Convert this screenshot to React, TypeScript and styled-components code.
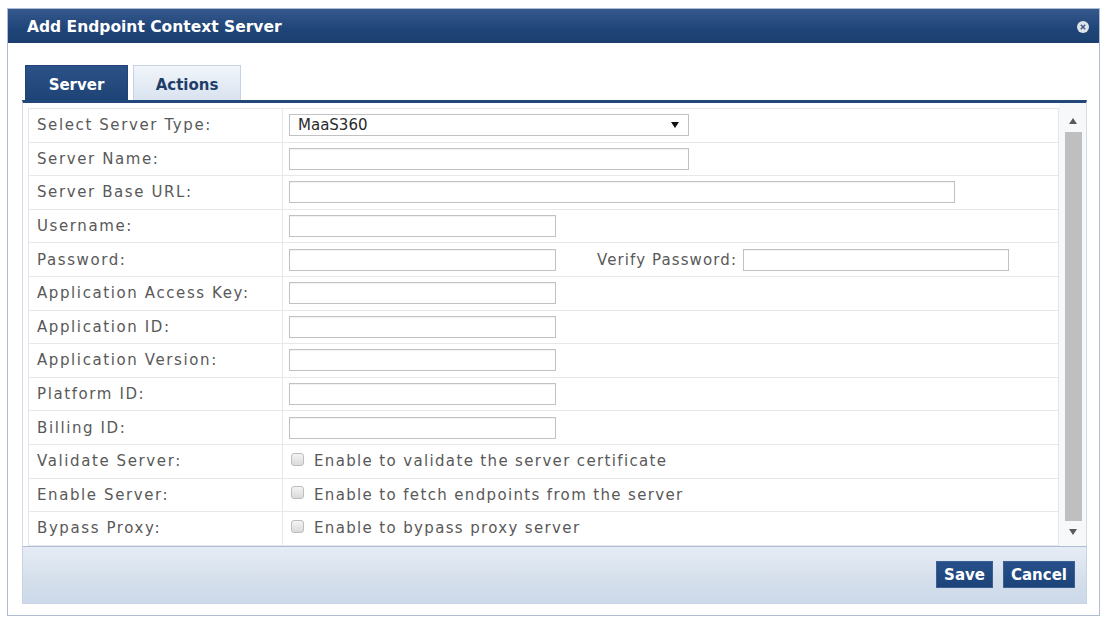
import styled, {createGlobalStyle} from "styled-components";

const GlobalStyle = createGlobalStyle`
  html, body {
    margin: 0;
    padding: 0;
    background: #ffffff;
  }
  body {
    font-family: "DejaVu Sans", Verdana, sans-serif;
  }
`

const Dialog = styled.section`
  margin: 8px 0 0 7px;
  width: 1093px;
  height: 608px;
  box-sizing: border-box;
  border: 1px solid #aebdd2;
  background: #ffffff;
  display: flex;
  flex-direction: column;
`

const Header = styled.header`
  height: 34px;
  display: flex;
  align-items: center;
  justify-content: space-between;
  padding: 2px 9px 0 19px;
  box-sizing: border-box;
  background: linear-gradient(#36598d, #1f4477 60%, #1c3f70);
`

const Title = styled.h1`
  margin: 0;
  font-size: 15.5px;
  font-weight: bold;
  color: #ffffff;
`

const CloseButton = styled.button`
  border: none;
  background: none;
  padding: 0;
  width: 14px;
  height: 14px;
  display: flex;
  cursor: pointer;
`

const Body = styled.div`
  flex: 1;
  display: flex;
  flex-direction: column;
  padding: 22px 12px 11px 14px;
`

const TabRow = styled.div`
  display: flex;
  align-items: flex-end;
  gap: 5px;
  padding-left: 3px;
`

const Tab = styled.button<{ $active?: boolean }>`
  height: 35px;
  width: ${p => p.$active ? 103 : 108}px;
  border: 1px solid ${p => p.$active ? "#1f4477" : "#c6d3e3"};
  border-bottom: none;
  font-family: "DejaVu Sans", Verdana, sans-serif;
  font-size: 15px;
  font-weight: bold;
  color: ${p => p.$active ? "#ffffff" : "#1f3d6b"};
  background: ${p => p.$active
    ? "linear-gradient(#2c5187, #1e4375)"
    : "linear-gradient(#f1f5fa, #d9e3ef)"};
  padding: 4px 0 0;
  cursor: pointer;
`

const Panel = styled.div`
  display: flex;
  border-top: 3px solid #22477a;
  border-left: 1px solid #d3dbe5;
  border-right: 1px solid #d3dbe5;
`

const FormArea = styled.div`
  flex: 1;
  padding: 5px 0 0 5px;
`

const Table = styled.div`
  border-left: 1px solid #e3e6ea;
  border-right: 1px solid #e3e6ea;
  border-top: 1px solid #e3e6ea;
`

const Row = styled.div`
  display: grid;
  grid-template-columns: 254px 1fr;
  height: 33.6px;
  box-sizing: border-box;
  border-bottom: 1px solid #e6e8eb;
`

const Label = styled.div`
  display: flex;
  align-items: center;
  padding-left: 8px;
  border-right: 1px solid #e6e8eb;
  font-size: 15px;
  letter-spacing: 1.6px;
  color: #595959;
`

const Value = styled.div`
  display: flex;
  align-items: center;
  padding-left: 6px;
`

const TextInput = styled.input<{ $width: number }>`
  width: ${p => p.$width}px;
  height: 22px;
  box-sizing: border-box;
  border: 1px solid #c2c2c2;
  box-shadow: inset 0 1px 1px rgba(0, 0, 0, 0.06);
  background: #ffffff;
  padding: 0 4px;
  font-family: "DejaVu Sans", Verdana, sans-serif;
  font-size: 14px;
`

const InlineLabel = styled.span`
  margin: 0 6px 0 41px;
  font-size: 15px;
  letter-spacing: 1.1px;
  color: #595959;
`

const SelectBox = styled.div`
  width: 400px;
  height: 22px;
  box-sizing: border-box;
  border: 1px solid #c2c2c2;
  display: flex;
  align-items: center;
  padding-right: 9px;
  background: #ffffff;
`

const Select = styled.select`
  flex: 1;
  height: 100%;
  border: none;
  outline: none;
  appearance: none;
  background: transparent;
  padding: 0 0 0 8px;
  font-family: "DejaVu Sans", Verdana, sans-serif;
  font-size: 15px;
  color: #2a2a2a;
`

const Checkbox = styled.input`
  appearance: none;
  width: 13px;
  height: 13px;
  margin: 0 10px 0 2px;
  border: 1px solid #bdbdbd;
  border-radius: 3px;
  background: linear-gradient(#f4f4f4, #dadada);
  position: relative;
  top: -2px;
`

const CheckText = styled.span`
  font-size: 15px;
  letter-spacing: 1.35px;
  color: #595959;
`

const ScrollBar = styled.div`
  width: 27px;
  display: flex;
  flex-direction: column;
  align-items: center;
  padding: 10px 0 6px 1px;
  box-sizing: border-box;
  background: #f7f8f9;
`

const ScrollArrow = styled.div`
  height: 16px;
  display: flex;
  align-items: center;
  justify-content: center;
`

const Thumb = styled.div`
  flex: 1;
  width: 17px;
  margin: 3px 0;
  background: #bfbfbf;
`

const Footer = styled.div`
  height: 58px;
  box-sizing: border-box;
  display: flex;
  align-items: center;
  justify-content: flex-end;
  gap: 10px;
  padding: 0 11px 0 0;
  border: 1px solid #c9d4e2;
  border-top: 1px solid #aebcd0;
  background: linear-gradient(#e6ecf5, #d6e0ec 55%, #ccd9e9);
`

const Button = styled.button`
  height: 27px;
  padding: 0 7px;
  border: 1px solid #3a5f92;
  background: linear-gradient(#27508a, #1c4479);
  color: #ffffff;
  font-family: "DejaVu Sans", Verdana, sans-serif;
  font-size: 15px;
  font-weight: bold;
  cursor: pointer;
`

const Triangle = ({up, dark}: { up?: boolean, dark?: boolean }) => (
    <svg width="8" height="6" viewBox="0 0 8 6">
        <polygon points={up ? "0,6 8,6 4,0" : "0,0 8,0 4,6"} fill={dark ? "#111111" : "#5a5a5a"}/>
    </svg>
)

const fields: { label: string, width?: number }[] = [
    {label: 'Server Name:', width: 400},
    {label: 'Server Base URL:', width: 666},
    {label: 'Username:', width: 267},
]

const moreFields = [
    'Application Access Key:',
    'Application ID:',
    'Application Version:',
    'Platform ID:',
    'Billing ID:',
]

const checks = [
    {label: 'Validate Server:', text: 'Enable to validate the server certificate'},
    {label: 'Enable Server:', text: 'Enable to fetch endpoints from the server'},
    {label: 'Bypass Proxy:', text: 'Enable to bypass proxy server'},
]

const App = () => {
    return (
        <>
            <GlobalStyle/>
            <Dialog>
                <Header>
                    <Title>Add Endpoint Context Server</Title>
                    <CloseButton aria-label="Close">
                        <svg width="14" height="14" viewBox="0 0 14 14">
                            <circle cx="7" cy="7" r="6" fill="#dfe4ea"/>
                            <path d="M4.8 4.8 L9.2 9.2 M9.2 4.8 L4.8 9.2" stroke="#3c5a86" strokeWidth="1.4"/>
                        </svg>
                    </CloseButton>
                </Header>
                <Body>
                    <TabRow>
                        <Tab $active>Server</Tab>
                        <Tab>Actions</Tab>
                    </TabRow>
                    <Panel>
                        <FormArea>
                            <Table>
                                <Row>
                                    <Label>Select Server Type:</Label>
                                    <Value>
                                        <SelectBox>
                                            <Select defaultValue="MaaS360">
                                                <option>MaaS360</option>
                                            </Select>
                                            <Triangle dark/>
                                        </SelectBox>
                                    </Value>
                                </Row>
                                {fields.map(f => (
                                    <Row key={f.label}>
                                        <Label>{f.label}</Label>
                                        <Value><TextInput $width={f.width || 267}/></Value>
                                    </Row>
                                ))}
                                <Row>
                                    <Label>Password:</Label>
                                    <Value>
                                        <TextInput type="password" $width={267}/>
                                        <InlineLabel>Verify Password:</InlineLabel>
                                        <TextInput type="password" $width={266}/>
                                    </Value>
                                </Row>
                                {moreFields.map(f => (
                                    <Row key={f}>
                                        <Label>{f}</Label>
                                        <Value><TextInput $width={267}/></Value>
                                    </Row>
                                ))}
                                {checks.map(c => (
                                    <Row key={c.label}>
                                        <Label>{c.label}</Label>
                                        <Value>
                                            <Checkbox type="checkbox"/>
                                            <CheckText>{c.text}</CheckText>
                                        </Value>
                                    </Row>
                                ))}
                            </Table>
                        </FormArea>
                        <ScrollBar>
                            <ScrollArrow><Triangle up/></ScrollArrow>
                            <Thumb/>
                            <ScrollArrow><Triangle/></ScrollArrow>
                        </ScrollBar>
                    </Panel>
                    <Footer>
                        <Button>Save</Button>
                        <Button>Cancel</Button>
                    </Footer>
                </Body>
            </Dialog>
        </>
    )
}

export default App
